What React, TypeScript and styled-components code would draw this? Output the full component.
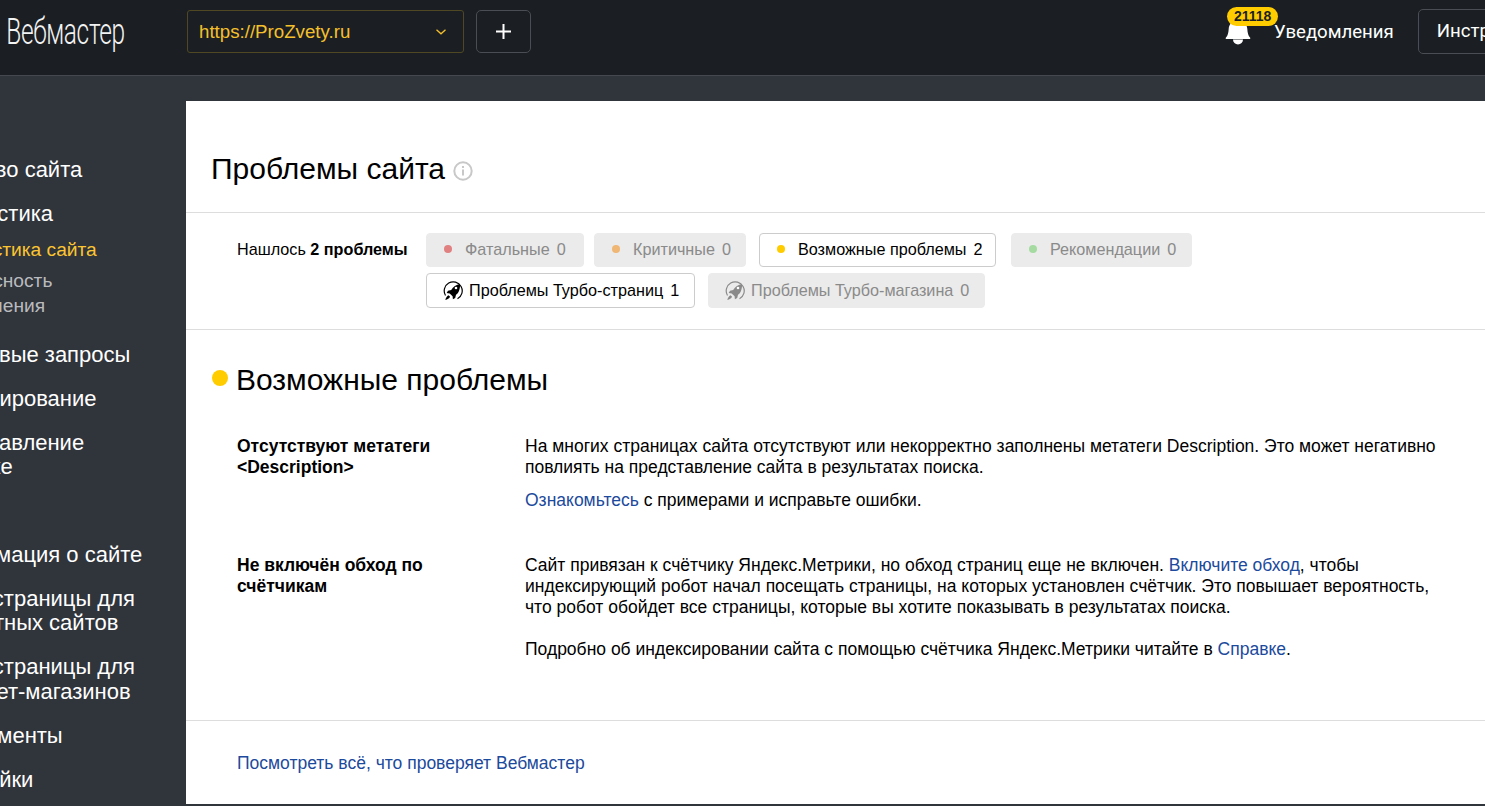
import styled, { createGlobalStyle } from 'styled-components';

const GlobalStyle = createGlobalStyle`
  html,
  body {
    margin: 0;
    height: 100%;
    overflow: hidden;
    background: #30343b;
    font-family: 'Liberation Sans', Arial, sans-serif;
  }
`;

const Shell = styled.div`
  width: 1485px;
  height: 806px;
  overflow: hidden;
  background: #30343b;
`;

const Header = styled.header`
  display: flex;
  align-items: center;
  box-sizing: border-box;
  height: 76px;
  padding-bottom: 12px;
  border-bottom: 1px solid #45494f;
  background: #1b1f23;
  color: #fff;
  white-space: nowrap;
`;

const Logo = styled.div`
  flex: 0 0 187px;
  box-sizing: border-box;
  padding-left: 6px;
  font-family: 'Roboto', sans-serif;
  font-weight: 300;
  font-size: 36px;
  letter-spacing: -0.5px;
  color: #f2f2f2;
  transform: scaleX(0.68);
  transform-origin: 7px 50%;
`;

const SiteSelect = styled.div`
  display: flex;
  flex: 0 0 277px;
  align-items: center;
  justify-content: space-between;
  box-sizing: border-box;
  height: 43px;
  padding: 0 17px 0 11px;
  border: 1px solid #4f4822;
  border-radius: 3px;
  color: #f5c02c;
  font-size: 18.7px;
`;

const AddButton = styled.button`
  display: flex;
  flex: 0 0 55px;
  align-items: center;
  justify-content: center;
  box-sizing: border-box;
  height: 43px;
  margin-left: 12px;
  padding: 0;
  border: 1px solid #4a4e54;
  border-radius: 5px;
  background: transparent;
`;

const Notifications = styled.div`
  position: relative;
  display: flex;
  align-items: center;
  flex-shrink: 0;
  margin-left: 694px;
  font-family: 'Roboto', sans-serif;
  font-size: 18.6px;
`;

const BellWrap = styled.div`
  display: flex;
  width: 26px;
  height: 24px;
  margin: 2px 23px 0 0;
`;

const Badge = styled.span`
  position: absolute;
  top: -12px;
  left: 2px;
  padding: 0 7px;
  height: 19px;
  border-radius: 10px;
  background: #ffcc00;
  color: #1b1f23;
  font-family: 'Liberation Sans', Arial, sans-serif;
  font-weight: 700;
  font-size: 14px;
  line-height: 19px;
`;

const ToolsButton = styled.div`
  flex-shrink: 0;
  box-sizing: border-box;
  height: 45px;
  margin-left: 24px;
  padding: 0 18px;
  border: 1px solid #4a4e54;
  border-radius: 5px;
  font-family: 'Roboto', sans-serif;
  font-size: 18.6px;
  line-height: 43px;
`;

const Body = styled.div`
  display: flex;
  padding-top: 25px;
`;

const Sidebar = styled.aside`
  flex: 0 0 186px;
  height: 705px;
  overflow: hidden;
`;

const Nav = styled.nav`
  display: flex;
  flex-direction: column;
  width: 250px;
  margin-left: -74.5px;
  padding-top: 57px;
`;

const NavItem = styled.a<{ $spaced?: boolean }>`
  margin-bottom: ${(p) => (p.$spaced ? 63 : 19.5)}px;
  color: #fff;
  font-size: 22px;
  line-height: 24.5px;
`;

const NavSub = styled.a<{ $active?: boolean }>`
  margin-bottom: ${(p) => (p.$active ? '6px' : '0')};
  color: ${(p) => (p.$active ? '#fbc531' : '#b9bbbe')};
  font-size: 19.2px;
  line-height: 25px;
`;

const SubList = styled.div`
  display: flex;
  flex-direction: column;
  margin: -9px 0 24.5px 4.5px;
`;

const Card = styled.main`
  flex: 1;
  height: 703px;
  background: #fff;
  color: #000;
`;

const TitleBar = styled.div`
  display: flex;
  align-items: center;
  box-sizing: border-box;
  height: 112px;
  padding: 25px 0 0 25px;
  border-bottom: 1px solid #ddd;
`;

const Title = styled.h1`
  margin: 0;
  font-size: 30px;
  font-weight: 400;
`;

const InfoIcon = styled.svg`
  margin: 3px 0 0 8px;
`;

const Filters = styled.div`
  display: flex;
  box-sizing: border-box;
  height: 117px;
  padding: 20px 0 0 51px;
  border-bottom: 1px solid #ddd;
`;

const FoundLabel = styled.div`
  flex: 0 0 189px;
  height: 34px;
  font-size: 16.2px;
  line-height: 33px;
`;

const Chips = styled.div`
  display: flex;
  flex-direction: column;
  gap: 6px;
`;

const ChipRow = styled.div`
  display: flex;
`;

const Chip = styled.div<{ $active?: boolean; $w: number; $gap: number; $tall?: boolean }>`
  display: flex;
  align-items: center;
  box-sizing: border-box;
  width: ${(p) => p.$w}px;
  height: ${(p) => (p.$tall ? 35 : 34)}px;
  margin-right: ${(p) => p.$gap}px;
  padding: 0 0 ${(p) => (p.$tall ? 0 : 2)}px 15px;
  border: 1px solid ${(p) => (p.$active ? '#ccc' : '#ebebeb')};
  border-radius: 4px;
  background: ${(p) => (p.$active ? '#fff' : '#ebebeb')};
  color: ${(p) => (p.$active ? '#000' : '#8a8a8a')};
  font-size: 16.2px;
  white-space: nowrap;
`;

const ChipDot = styled.span<{ $color: string }>`
  width: 8px;
  height: 8px;
  margin: 0 13px 0 2px;
  border-radius: 50%;
  background: ${(p) => p.$color};
`;

const ChipCount = styled.span`
  margin-left: 7px;
`;

const RocketIcon = styled.svg<{ $muted?: boolean }>`
  margin: 0 6px 0 1px;
  color: ${(p) => (p.$muted ? '#8a8a8a' : '#000')};
`;

const Section = styled.section`
  box-sizing: border-box;
  height: 391px;
  padding: 32px 0 0 26px;
  border-bottom: 1px solid #ddd;
`;

const SectionTitle = styled.h2`
  display: flex;
  align-items: center;
  margin: 0 0 38px;
  font-size: 30px;
  font-weight: 400;
  line-height: 36px;
`;

const SectionDot = styled.span`
  width: 16px;
  height: 16px;
  margin: 0 8px 4px 0;
  border-radius: 50%;
  background: #ffcc00;
`;

const Problem = styled.div`
  display: grid;
  grid-template-columns: 288px 915px;
  margin-bottom: 32px;
  padding-left: 25px;
  font-size: 17.5px;
  line-height: 21px;
`;

const ProblemName = styled.div`
  font-weight: 700;
`;

const ProblemText = styled.div`
  p {
    margin: 0 0 12px;
  }
`;

const Link = styled.a`
  color: #1c4a9c;
`;

const Footer = styled.div`
  padding: 32px 0 0 51px;
  font-size: 17.5px;
  line-height: 21px;
`;

const Rocket = ({ muted }: { muted?: boolean }) => (
  <RocketIcon $muted={muted} width="20" height="20" viewBox="0 0 20 20">
    <path d="M2.5 14.5A9 9 0 1 1 14.500 17.800" fill="none" stroke="currentColor" strokeWidth="1.2" />
    <path
      d="M17 3c-3.800.5-6.800 2.700-8.800 6L5 9.800l-1.300 2.300 3 .3 2.900 2.900.3 3 2.300-1.300.8-3.200C16 11.800 17.300 7.500 17 3z"
      fill="currentColor"
    />
    <circle cx="13" cy="7" r="1.300" fill="#fff" />
    <path d="M5.500 14.200c-1.700.9-2.700 2.700-3.200 4.800 2.200-.5 3.900-1.500 4.800-3.200z" fill="currentColor" />
  </RocketIcon>
);

export default function App() {
  return (
    <>
      <GlobalStyle />
      <Shell>
        <Header>
          <Logo>Вебмастер</Logo>
          <SiteSelect>
            https://ProZvety.ru
            <svg width="10" height="6" viewBox="0 0 10 6">
              <path d="M.5.800 5 4.800 9.500.800" fill="none" stroke="#f5c02c" strokeWidth="1.300" />
            </svg>
          </SiteSelect>
          <AddButton aria-label="Добавить сайт">
            <svg width="15" height="15" viewBox="0 0 15 15">
              <path d="M7.500 0v15M0 7.500h15" stroke="#fff" strokeWidth="2" />
            </svg>
          </AddButton>
          <Notifications>
            <BellWrap>
              <svg width="26" height="24" viewBox="0 0 26 24">
                <path
                  d="M13 0C7 0 4 3 3.700 8 3.400 12 2.800 14.500 1 16.500c-.7.800-.3 1.500.6 1.500h22.800c.9 0 1.300-.7.600-1.500-1.800-2-2.400-4.500-2.700-8.500C22 3 19 0 13 0zM8 18.500a5 5 0 0 0 10 0z"
                  fill="#fff"
                />
              </svg>
            </BellWrap>
            <Badge>21118</Badge>
            Уведомления
          </Notifications>
          <ToolsButton>Инструменты</ToolsButton>
        </Header>
        <Body>
          <Sidebar>
            <Nav>
              <NavItem>Качество сайта</NavItem>
              <NavItem>Диагностика</NavItem>
              <SubList>
                <NavSub $active>Диагностика сайта</NavSub>
                <NavSub>
                  Безопасность
                  <br />и нарушения
                </NavSub>
              </SubList>
              <NavItem>Поисковые запросы</NavItem>
              <NavItem>Индексирование</NavItem>
              <NavItem $spaced>
                Представление
                <br />в поиске
              </NavItem>
              <NavItem>Информация о сайте</NavItem>
              <NavItem>
                Турбо-страницы для
                <br />
                контентных сайтов
              </NavItem>
              <NavItem>
                Турбо-страницы для
                <br />
                интернет-магазинов
              </NavItem>
              <NavItem>Инструменты</NavItem>
              <NavItem>Настройки</NavItem>
            </Nav>
          </Sidebar>
          <Card>
            <TitleBar>
              <Title>Проблемы сайта</Title>
              <InfoIcon width="20" height="20" viewBox="0 0 20 20">
                <circle cx="10" cy="10" r="8.700" fill="none" stroke="#c8c8c8" strokeWidth="2" />
                <path d="M10 8.500v6M10 5v2" stroke="#c8c8c8" strokeWidth="2" />
              </InfoIcon>
            </TitleBar>
            <Filters>
              <FoundLabel>
                Нашлось <b>2 проблемы</b>
              </FoundLabel>
              <Chips>
                <ChipRow>
                  <Chip $w={158} $gap={10}>
                    <ChipDot $color="#e08080" />
                    Фатальные<ChipCount>0</ChipCount>
                  </Chip>
                  <Chip $w={152} $gap={13}>
                    <ChipDot $color="#f0b673" />
                    Критичные<ChipCount>0</ChipCount>
                  </Chip>
                  <Chip $active $w={237} $gap={15}>
                    <ChipDot $color="#ffcc00" />
                    Возможные проблемы<ChipCount>2</ChipCount>
                  </Chip>
                  <Chip $w={181} $gap={0}>
                    <ChipDot $color="#a5dba0" />
                    Рекомендации<ChipCount>0</ChipCount>
                  </Chip>
                </ChipRow>
                <ChipRow>
                  <Chip $active $tall $w={269} $gap={13}>
                    <Rocket />
                    Проблемы Турбо-страниц<ChipCount>1</ChipCount>
                  </Chip>
                  <Chip $tall $w={277} $gap={0}>
                    <Rocket muted />
                    Проблемы Турбо-магазина<ChipCount>0</ChipCount>
                  </Chip>
                </ChipRow>
              </Chips>
            </Filters>
            <Section>
              <SectionTitle>
                <SectionDot />
                Возможные проблемы
              </SectionTitle>
              <Problem>
                <ProblemName>
                  Отсутствуют метатеги
                  <br />
                  &lt;Description&gt;
                </ProblemName>
                <ProblemText>
                  <p>
                    На многих страницах сайта отсутствуют или некорректно заполнены метатеги
                    Description. Это может негативно повлиять на представление сайта в результатах
                    поиска.
                  </p>
                  <p>
                    <Link>Ознакомьтесь</Link> с примерами и исправьте ошибки.
                  </p>
                </ProblemText>
              </Problem>
              <Problem>
                <ProblemName>
                  Не включён обход по
                  <br />
                  счётчикам
                </ProblemName>
                <ProblemText>
                  Сайт привязан к счётчику Яндекс.Метрики, но обход страниц еще не включен.{' '}
                  <Link>Включите обход</Link>, чтобы индексирующий робот начал посещать страницы,
                  на которых установлен счётчик. Это повышает вероятность, что робот обойдет все
                  страницы, которые вы хотите показывать в результатах поиска.
                  <br />
                  <br />
                  Подробно об индексировании сайта с помощью счётчика Яндекс.Метрики читайте в{' '}
                  <Link>Справке</Link>.
                </ProblemText>
              </Problem>
            </Section>
            <Footer>
              <Link>Посмотреть всё, что проверяет Вебмастер</Link>
            </Footer>
          </Card>
        </Body>
      </Shell>
    </>
  );
}
